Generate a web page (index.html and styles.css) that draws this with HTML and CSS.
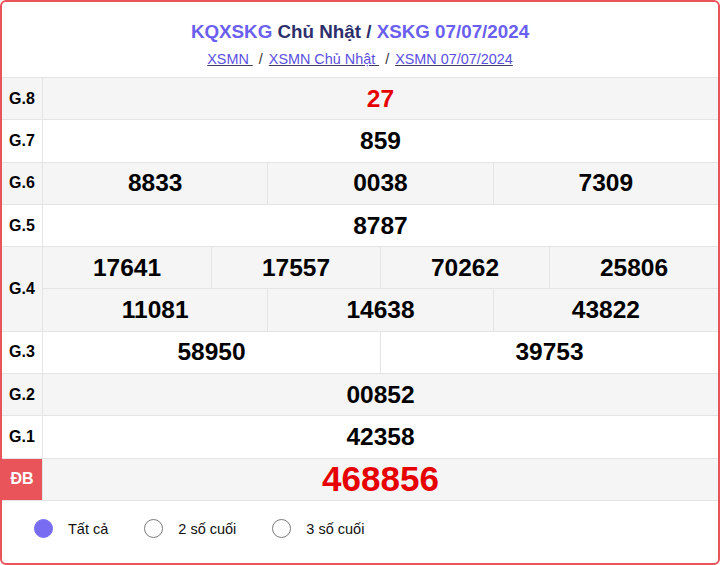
FILE: index.html
```html
<!DOCTYPE html>
<html lang="vi">
<head>
<meta charset="utf-8">
<title>KQXSKG Chủ Nhật</title>
<link rel="stylesheet" href="styles.css">
</head>
<body>
<div class="box">
  <div class="head">
    <h1 class="title"><span class="hl">KQXSKG</span> Chủ Nhật / <span class="hl">XSKG 07/07/2024</span></h1>
    <div class="crumbs">
      <a href="#">XSMN </a><span class="sep">/</span><a href="#">XSMN Chủ Nhật </a><span class="sep">/</span><a href="#">XSMN 07/07/2024</a>
    </div>
  </div>
  <div class="grid">
    <div class="row alt">
      <div class="label">G.8</div>
      <div class="vals"><div class="cell red">27</div></div>
    </div>
    <div class="row">
      <div class="label">G.7</div>
      <div class="vals"><div class="cell">859</div></div>
    </div>
    <div class="row alt">
      <div class="label">G.6</div>
      <div class="vals"><div class="cell">8833</div><div class="cell">0038</div><div class="cell">7309</div></div>
    </div>
    <div class="row">
      <div class="label">G.5</div>
      <div class="vals"><div class="cell">8787</div></div>
    </div>
    <div class="row alt double">
      <div class="label">G.4</div>
      <div class="stack">
        <div class="vals"><div class="cell">17641</div><div class="cell">17557</div><div class="cell">70262</div><div class="cell">25806</div></div>
        <div class="vals sub"><div class="cell">11081</div><div class="cell">14638</div><div class="cell">43822</div></div>
      </div>
    </div>
    <div class="row">
      <div class="label">G.3</div>
      <div class="vals"><div class="cell">58950</div><div class="cell">39753</div></div>
    </div>
    <div class="row alt">
      <div class="label">G.2</div>
      <div class="vals"><div class="cell">00852</div></div>
    </div>
    <div class="row">
      <div class="label">G.1</div>
      <div class="vals"><div class="cell">42358</div></div>
    </div>
    <div class="row alt">
      <div class="label db">ĐB</div>
      <div class="vals"><div class="cell red big">468856</div></div>
    </div>
  </div>
  <div class="opts">
    <label class="opt"><span class="dot on"></span>Tất cả</label>
    <label class="opt"><span class="dot"></span>2 số cuối</label>
    <label class="opt"><span class="dot"></span>3 số cuối</label>
  </div>
</div>
</body>
</html>
```
FILE: styles.css
```css
* { box-sizing: border-box; }
html, body { margin: 0; padding: 0; background: #fff; }
body { font-family: "Liberation Sans", Arial, sans-serif; color: #000; }
.box {
  width: 720px;
  height: 565px;
  border: 2px solid #e9545a;
  border-radius: 6px;
  overflow: hidden;
}
.head { padding: 18px 0 8px; text-align: center; }
.title {
  margin: 0;
  font-size: 18.8px;
  line-height: 24px;
  font-weight: bold;
  color: #2c2f6b;
}
.title .hl { color: #6a5ff0; }
.crumbs {
  margin-top: 5px;
  font-size: 14.4px;
  line-height: 20px;
}
.crumbs a { color: #5a4fe0; text-decoration: underline; text-decoration-color: #3d3d5c; }
.sep { color: #333; margin: 0 6px; }
.grid { border-bottom: 1px solid #e4e4e4; }
.row {
  display: flex;
  height: 42.3px;
  border-top: 1px solid #e4e4e4;
  background: #fff;
}
.row.alt { background: #f5f5f5; }
.row.double { height: 84.6px; }
.label {
  width: 41px;
  flex: none;
  border-right: 1px solid #e4e4e4;
  display: flex;
  align-items: center;
  justify-content: center;
  font-size: 16px;
  font-weight: bold;
}
.label.db { background: #e9545a; color: #fff; }
.stack { flex: 1; display: flex; flex-direction: column; }
.stack .vals { flex: 1; }
.vals { flex: 1; display: flex; }
.vals.sub { border-top: 1px solid #e4e4e4; }
.cell {
  flex: 1;
  display: flex;
  align-items: center;
  justify-content: center;
  font-size: 24.5px;
  font-weight: bold;
}
.cell + .cell { border-left: 1px solid #e4e4e4; }
.red { color: #e60000; }
.big { font-size: 35px; }
.opts {
  display: flex;
  gap: 36px;
  padding: 18px 0 0 32px;
}
.opt {
  display: flex;
  align-items: center;
  gap: 15px;
  font-size: 14.5px;
  line-height: 20px;
  color: #111;
}
.dot {
  width: 19px;
  height: 19px;
  border-radius: 50%;
  border: 1px solid #7a7a7a;
  background: #fff;
}
.dot.on { background: #776cf2; border-color: #776cf2; }
```
